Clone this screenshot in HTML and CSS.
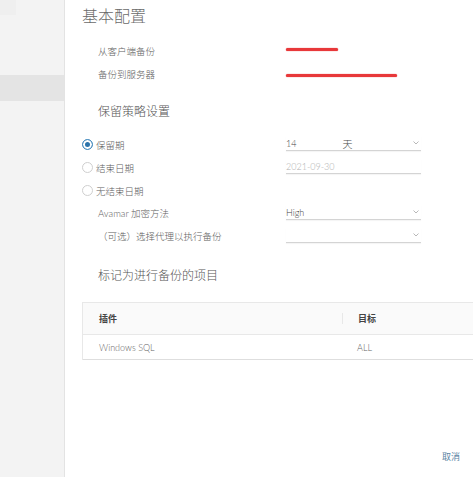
FILE: index.html
```html
<!DOCTYPE html>
<html lang="zh-CN">
<head>
<meta charset="utf-8">
<title>基本配置</title>
<link rel="stylesheet" href="styles.css">
</head>
<body>
<aside class="sidebar">
  <div class="corner"></div>
  <div class="nav-item"></div>
</aside>
<main class="main">
  <h1 class="title">基本配置</h1>
  <div class="info">
    <div class="row"><span class="label">从客户端备份</span><span class="redact short"></span></div>
    <div class="row"><span class="label">备份到服务器</span><span class="redact long"></span></div>
  </div>

  <h2 class="heading">保留策略设置</h2>
  <div class="form">
    <div class="row">
      <label class="radio-label"><span class="radio checked"></span>保留期</label>
      <div class="field">
        <span class="val">14</span><span class="unit">天</span>
        <svg class="chev" viewBox="0 0 6 4" width="6" height="4"><polyline points="0.5,0.5 3,3 5.5,0.5" fill="none" stroke="#b0b0b0" stroke-width="0.9"/></svg>
      </div>
    </div>
    <div class="row">
      <label class="radio-label"><span class="radio"></span>结束日期</label>
      <div class="field"><span class="val muted">2021-09-30</span></div>
    </div>
    <div class="row">
      <label class="radio-label"><span class="radio"></span>无结束日期</label>
    </div>
    <div class="row">
      <span class="label indent">Avamar 加密方法</span>
      <div class="field">
        <span class="val">High</span>
        <svg class="chev" viewBox="0 0 6 4" width="6" height="4"><polyline points="0.5,0.5 3,3 5.5,0.5" fill="none" stroke="#b0b0b0" stroke-width="0.9"/></svg>
      </div>
    </div>
    <div class="row">
      <span class="label indent">（可选）选择代理以执行备份</span>
      <div class="field">
        <span class="val"></span>
        <svg class="chev" viewBox="0 0 6 4" width="6" height="4"><polyline points="0.5,0.5 3,3 5.5,0.5" fill="none" stroke="#b0b0b0" stroke-width="0.9"/></svg>
      </div>
    </div>
  </div>

  <h2 class="heading h-items">标记为进行备份的项目</h2>
  <div class="table">
    <div class="thead">
      <div class="cell c1">插件</div>
      <div class="cell c2">目标</div>
    </div>
    <div class="trow">
      <div class="cell c1">Windows SQL</div>
      <div class="cell c2">ALL</div>
    </div>
  </div>

  <div class="footer"><span class="cancel">取消</span></div>
</main>
</body>
</html>
```

FILE: styles.css
```css
html, body {
  margin: 0;
  padding: 0;
  overflow: hidden;
}
body {
  display: flex;
  width: 473px;
  height: 477px;
  background: #fff;
  font-family: "Lato", "Noto Sans CJK SC", sans-serif;
  color: #5a5a5a;
}
.sidebar {
  width: 64px;
  flex: none;
  background: #f3f3f3;
  border-right: 1px solid #e3e3e3;
  display: flex;
  flex-direction: column;
}
.corner {
  width: 16px;
  height: 15px;
  background: #efefef;
}
.nav-item {
  margin-top: 60px;
  height: 26px;
  background: #e4e4e4;
}
.main {
  flex: 1;
  min-width: 0;
  padding-left: 17px;
  display: flex;
  flex-direction: column;
}
.title {
  margin: 0;
  padding-top: 6px;
  font-size: 16px;
  line-height: 20px;
  font-weight: 300;
  color: #6a6a6a;
}
.info {
  margin-top: 14px;
  padding-left: 16px;
}
.row {
  height: 23px;
  display: flex;
  align-items: flex-start;
}
.label {
  width: 188px;
  flex: none;
  font-size: 9.5px;
  line-height: 23px;
  font-weight: 300;
  color: #5e5e5e;
}
.redact {
  display: block;
  height: 3px;
  margin-top: 9px;
  border-radius: 2px;
  background: #e8383a;
  box-shadow: 0 0 1px #e8383a;
}
.redact.short { width: 52px; margin-top: 8px; }
.redact.long { width: 111px; margin-top: 11px; }

.heading {
  margin: 16px 0 0 16px;
  font-size: 12px;
  line-height: 20px;
  font-weight: 300;
  color: #555;
}
.form {
  margin-top: 11px;
}
.radio-label {
  width: 204px;
  flex: none;
  display: flex;
  align-items: center;
  height: 23px;
  font-size: 9.5px;
  font-weight: 300;
  color: #5e5e5e;
}
.radio {
  box-sizing: border-box;
  width: 11px;
  height: 11px;
  border-radius: 50%;
  border: 1px solid #cfcfcf;
  background: #fff;
  margin-right: 3px;
}
.radio.checked {
  border: 1px solid #4a8fc2;
  background: #2a73ab;
  box-shadow: inset 0 0 0 2px #fff;
}
.label.indent {
  width: 188px;
  margin-left: 16px;
}
.field {
  box-sizing: border-box;
  width: 135px;
  height: 15px;
  margin-top: 3px;
  border-bottom: 1px solid #d4d4d4;
  box-shadow: 0 1px 1px rgba(0,0,0,0.04);
  display: flex;
  align-items: center;
  font-size: 9px;
  font-weight: 300;
  color: #444;
}
.val { flex: none; }
.val.muted { color: #b0b0b0; }
.unit {
  margin-left: 46px;
  font-size: 10px;
  font-weight: 300;
  color: #4a4a4a;
}
.chev {
  margin-left: auto;
  margin-right: 2px;
}
.h-items {
  margin-top: 18px;
}
.table {
  margin-top: 16px;
  border-top: 1px solid #e8e8e8;
  border-left: 1px solid #e8e8e8;
  font-size: 9px;
}
.thead {
  display: flex;
  height: 31px;
  align-items: center;
  background: #fafafa;
  border-bottom: 1px solid #e8e8e8;
  font-weight: 700;
  color: #444;
}
.trow {
  display: flex;
  height: 24px;
  align-items: center;
  border-bottom: 1px solid #dedede;
  font-weight: 300;
  color: #666;
}
.cell.c1 {
  width: 259px;
  flex: none;
  box-sizing: border-box;
  padding-left: 16px;
}
.cell.c2 {
  padding-left: 15px;
}
.thead .c2 {
  border-left: 1px solid #e8e8e8;
  line-height: 11px;
}
.footer {
  margin-top: auto;
  padding: 0 13px 14px 0;
  text-align: right;
}
.cancel {
  font-size: 9px;
  color: #5a84a3;
}
```
